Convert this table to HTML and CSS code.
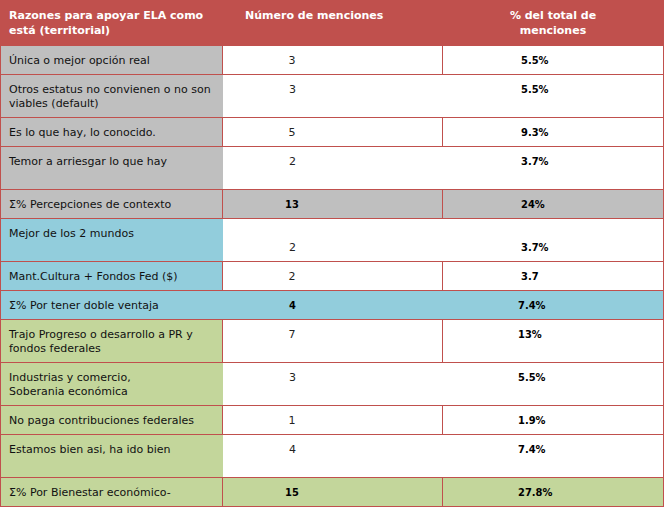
FILE: index.html
```html
<!DOCTYPE html>
<html lang="es">
<head>
<meta charset="utf-8">
<title>Razones para apoyar ELA</title>
<link rel="stylesheet" href="styles.css">
</head>
<body>
<div class="tbl">
  <div class="row head">
    <div class="cell c1">Razones para apoyar ELA como<br>está (territorial)</div>
    <div class="cell c2">Número de menciones</div>
    <div class="cell c3">% del total de<br>menciones</div>
  </div>

  <div class="row gray short lines">
    <div class="cell c1">Única o mejor opción real</div>
    <div class="cell c2">3</div>
    <div class="cell c3">5.5%</div>
  </div>
  <div class="row gray tall">
    <div class="cell c1">Otros estatus no convienen o no son<br>viables (default)</div>
    <div class="cell c2">3</div>
    <div class="cell c3">5.5%</div>
  </div>
  <div class="row gray short lines">
    <div class="cell c1">Es lo que hay, lo conocido.</div>
    <div class="cell c2">5</div>
    <div class="cell c3">9.3%</div>
  </div>
  <div class="row gray tall">
    <div class="cell c1">Temor a arriesgar lo que hay</div>
    <div class="cell c2">2</div>
    <div class="cell c3">3.7%</div>
  </div>
  <div class="row gray short lines total">
    <div class="cell c1">Ʃ% Percepciones de contexto</div>
    <div class="cell c2">13</div>
    <div class="cell c3">24%</div>
  </div>

  <div class="row blue tall low">
    <div class="cell c1">Mejor de los 2 mundos</div>
    <div class="cell c2">2</div>
    <div class="cell c3">3.7%</div>
  </div>
  <div class="row blue short lines">
    <div class="cell c1">Mant.Cultura + Fondos Fed ($)</div>
    <div class="cell c2">2</div>
    <div class="cell c3">3.7</div>
  </div>
  <div class="row blue short total shift">
    <div class="cell c1">Ʃ% Por tener doble ventaja</div>
    <div class="cell c2">4</div>
    <div class="cell c3">7.4%</div>
  </div>

  <div class="row green tall lines shift">
    <div class="cell c1">Trajo Progreso o desarrollo a PR y<br>fondos federales</div>
    <div class="cell c2">7</div>
    <div class="cell c3">13%</div>
  </div>
  <div class="row green tall shift">
    <div class="cell c1">Industrias y comercio,<br>Soberania económica</div>
    <div class="cell c2">3</div>
    <div class="cell c3">5.5%</div>
  </div>
  <div class="row green short lines shift">
    <div class="cell c1">No paga contribuciones federales</div>
    <div class="cell c2">1</div>
    <div class="cell c3">1.9%</div>
  </div>
  <div class="row green tall shift">
    <div class="cell c1">Estamos bien asi, ha ido bien</div>
    <div class="cell c2">4</div>
    <div class="cell c3">7.4%</div>
  </div>
  <div class="row green short lines total shift">
    <div class="cell c1">Ʃ% Por Bienestar económico-</div>
    <div class="cell c2">15</div>
    <div class="cell c3">27.8%</div>
  </div>
</div>
</body>
</html>
```
FILE: styles.css
```css
html, body {
  margin: 0;
  padding: 0;
  background: #ffffff;
}

body {
  font-family: "DejaVu Sans", "Liberation Sans", sans-serif;
  font-size: 11px;
  line-height: 14px;
  color: #111111;
}

.tbl {
  width: 664px;
  box-sizing: border-box;
  border-left: 1px solid #c0504d;
  border-right: 1px solid #c0504d;
}

.row {
  display: grid;
  grid-template-columns: 222px 220px 220px;
  box-sizing: border-box;
  border-bottom: 1px solid #c0504d;
}

.row.short { height: 29px; }
.row.tall { height: 43px; }

.cell {
  box-sizing: border-box;
  padding-top: 8px;
}

.c1 { padding-left: 8px; }

.c2 {
  text-align: center;
  padding-right: 81px;
  color: #222222;
}

.c3 {
  padding-left: 78px;
  font-family: "DejaVu Sans Condensed", "DejaVu Sans", sans-serif;
  font-stretch: condensed;
  font-weight: bold;
  color: #000000;
}

.row.shift .c3 { padding-left: 75px; }

.row.lines .c1,
.row.lines .c2 {
  border-right: 1px solid #c0504d;
}

.row.total .c2 {
  font-family: "DejaVu Sans Condensed", "DejaVu Sans", sans-serif;
  font-stretch: condensed;
  font-weight: bold;
  color: #000000;
}

.row.low .c2,
.row.low .c3 { padding-top: 22px; }

/* header */
.row.head {
  height: 46px;
  background: #c0504d;
  border-bottom: 0;
  color: #ffffff;
  line-height: 15px;
}

.row.head .cell {
  font-family: "DejaVu Sans", sans-serif;
  font-stretch: normal;
  font-weight: bold;
  color: #ffffff;
  padding-top: 8px;
}

.row.head .c2 {
  text-align: left;
  padding-right: 0;
  padding-left: 22px;
}

.row.head .c3 {
  padding-left: 0;
  text-align: center;
}

/* group colours */
.gray .c1 { background: #bfbfbf; }
.blue .c1 { background: #92cddc; }
.green .c1 { background: #c3d69b; }

.gray.total .cell { background: #bfbfbf; }
.blue.total .cell { background: #92cddc; }
.green.total .cell { background: #c3d69b; }
```
